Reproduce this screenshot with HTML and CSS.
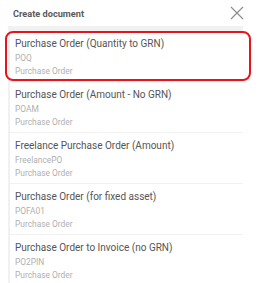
FILE: index.html
```html
<!DOCTYPE html>
<html>
<head>
<meta charset="utf-8">
<link rel="stylesheet" href="styles.css">
</head>
<body>
<div class="dialog">
  <div class="header">
    <span class="title">Create document</span>
    <svg class="close" width="14" height="14" viewBox="0 0 14 14"><path d="M1 1L13 13M13 1L1 13" stroke="#8a8a8a" stroke-width="1.1" fill="none"/></svg>
  </div>
  <div class="list">
    <div class="item">
      <div class="name">Purchase Order (Quantity to GRN)</div>
      <div class="sub code">POQ</div>
      <div class="sub">Purchase Order</div>
    </div>
    <div class="item">
      <div class="name">Purchase Order (Amount - No GRN)</div>
      <div class="sub code">POAM</div>
      <div class="sub">Purchase Order</div>
    </div>
    <div class="item">
      <div class="name">Freelance Purchase Order (Amount)</div>
      <div class="sub code">FreelancePO</div>
      <div class="sub">Purchase Order</div>
    </div>
    <div class="item">
      <div class="name">Purchase Order (for fixed asset)</div>
      <div class="sub code">POFA01</div>
      <div class="sub">Purchase Order</div>
    </div>
    <div class="item">
      <div class="name">Purchase Order to Invoice (no GRN)</div>
      <div class="sub code">PO2PIN</div>
      <div class="sub">Purchase Order</div>
    </div>
  </div>
  <div class="highlight"></div>
</div>
</body>
</html>
```
FILE: styles.css
```css
html, body {
  margin: 0;
  padding: 0;
  background: #fff;
  font-family: Roboto, "Liberation Sans", sans-serif;
  overflow: hidden;
}
.dialog {
  position: relative;
  width: 264px;
  height: 283px;
}
.header {
  height: 26px;
  display: flex;
  align-items: center;
  justify-content: space-between;
  padding: 0 20px 0 13px;
}
.title {
  font-size: 9.2px;
  font-weight: 700;
  color: #5a5a5a;
}
.close {
  display: block;
  margin-top: -1px;
}
.list {
  margin-left: 8px;
  width: 235px;
  background: #f1f1f1;
  padding: 5px 0 0 2px;
  box-sizing: border-box;
}
.item {
  background: #fff;
  padding: 6px 0 3px 5px;
  margin-bottom: 1px;
}
.name {
  font-size: 10px;
  line-height: 13px;
  color: #555;
}
.sub {
  font-size: 8.4px;
  line-height: 13px;
  color: #b0b0b0;
}
.code {
  margin-top: 2px;
}
.highlight {
  position: absolute;
  left: 5px;
  top: 31px;
  width: 246px;
  height: 50px;
  box-sizing: border-box;
  border: 2px solid #e8141b;
  border-radius: 8px;
}
```
